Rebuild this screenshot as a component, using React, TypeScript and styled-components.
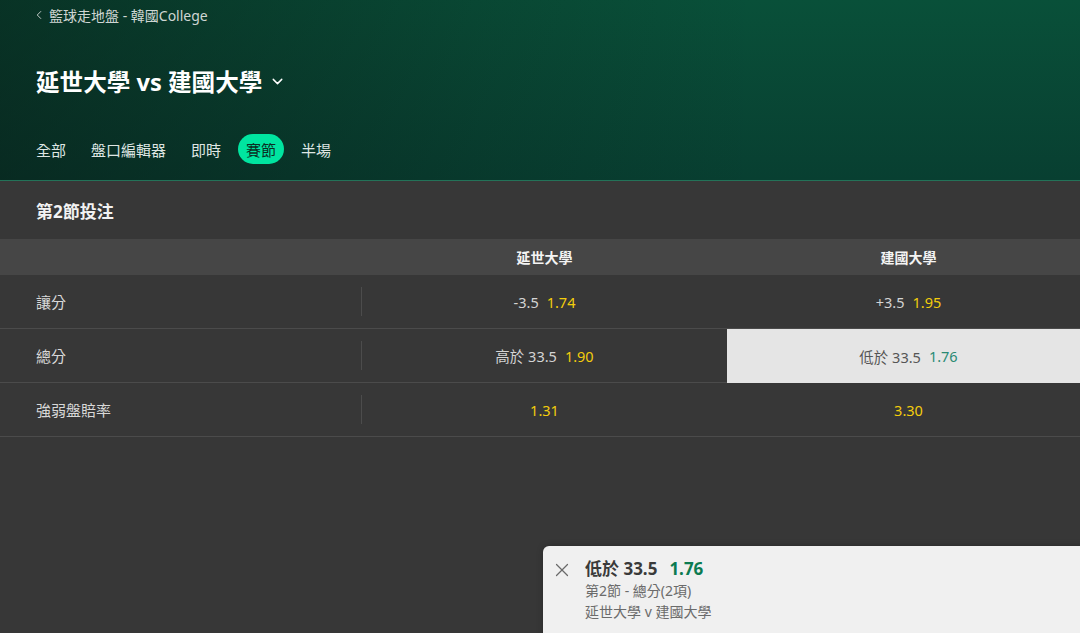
import React from "react";
import styled, { createGlobalStyle } from "styled-components";
import { ChevronDown, ChevronLeft, X } from "lucide-react";

const FONT = `"Noto Sans", "Noto Sans CJK TC", sans-serif`;

const Global = createGlobalStyle`
  html, body { margin: 0; padding: 0; background: #373737; }
  body { font-family: ${FONT}; overflow: hidden; }
  * { box-sizing: border-box; }
`;

const Page = styled.div`
  position: relative;
  width: 1080px;
  height: 633px;
  overflow: hidden;
  background: #373737;
`;

const Hero = styled.header`
  height: 181px;
  border-bottom: 1px solid #237258;
  background:
    linear-gradient(90deg, rgba(8, 22, 18, 0.5) 0%, rgba(8, 22, 18, 0.15) 45%, rgba(0, 0, 0, 0) 70%),
    linear-gradient(180deg, #095039 0%, #083f31 100%);
  display: flex;
  flex-direction: column;
`;

const Crumb = styled.div`
  display: flex;
  align-items: center;
  gap: 3px;
  padding: 5px 0 0 32px;
  height: 25px;
  font-size: 14px;
  color: #cfd6d3;
  svg { color: #cfd6d3; }
`;

const TitleRow = styled.div`
  display: flex;
  align-items: center;
  gap: 7px;
  padding: 33px 0 0 36px;
  height: 80px;
`;

const Title = styled.h1`
  margin: 0;
  font-size: 23.6px;
  font-weight: 700;
  color: #ffffff;
  line-height: 32px;
`;

const Tabs = styled.nav`
  display: flex;
  align-items: center;
  gap: 9px;
  padding: 29px 0 0 28px;
`;

const Tab = styled.div<{ $active?: boolean }>`
  height: 30px;
  padding: 0 8px;
  border-radius: 15px;
  display: flex;
  align-items: center;
  font-size: 15px;
  color: ${(p) => (p.$active ? "#0b2e23" : "#dfe6e3")};
  background: ${(p) => (p.$active ? "#00e5a0" : "transparent")};
`;

const SectionTitle = styled.h2`
  margin: 0;
  height: 58px;
  padding-left: 36px;
  display: flex;
  align-items: center;
  font-size: 17px;
  font-weight: 700;
  color: #f2f2f2;
`;

const Grid = styled.div`
  display: grid;
  grid-template-columns: 362px 365px 363px;
`;

const HeadRow = styled(Grid)`
  height: 36px;
  background: #464646;
`;

const HeadCell = styled.div`
  display: flex;
  align-items: center;
  justify-content: center;
  font-size: 14px;
  font-weight: 700;
  color: #f4f4f4;
`;

const Row = styled(Grid)`
  height: 54px;
  border-bottom: 1px solid #4b4b4b;
`;

const LabelCell = styled.div`
  display: flex;
  align-items: center;
  padding-left: 36px;
  font-size: 15px;
  color: #d8d8d8;
  position: relative;
  &::after {
    content: "";
    position: absolute;
    right: 0;
    top: 12px;
    bottom: 12px;
    width: 1px;
    background: #4c4c4c;
  }
`;

const OddsCell = styled.div<{ $selected?: boolean }>`
  display: flex;
  align-items: center;
  justify-content: center;
  gap: 8px;
  font-size: 14.5px;
  background: ${(p) => (p.$selected ? "#e5e5e5" : "transparent")};
  margin-bottom: ${(p) => (p.$selected ? "-1px" : "0")};
`;

const Line = styled.span<{ $selected?: boolean }>`
  color: ${(p) => (p.$selected ? "#555555" : "#d4d4d4")};
`;

const Price = styled.span<{ $selected?: boolean }>`
  color: ${(p) => (p.$selected ? "#2b8a74" : "#f3cd0c")};
`;

const Slip = styled.div`
  position: absolute;
  left: 543px;
  top: 546px;
  width: 560px;
  height: 100px;
  background: #f0f0f0;
  border-top-left-radius: 6px;
  display: flex;
  gap: 12px;
  padding: 11px 0 0 8px;
  box-shadow: 0 0 6px rgba(0, 0, 0, 0.25);
`;

const CloseBtn = styled.div`
  width: 22px;
  height: 22px;
  margin-top: 2px;
  color: #6a6a6a;
  display: flex;
  align-items: center;
  justify-content: center;
`;

const SlipBody = styled.div`
  display: flex;
  flex-direction: column;
`;

const SlipMain = styled.div`
  display: flex;
  gap: 12px;
  font-size: 17px;
  font-weight: 700;
  line-height: 23px;
  color: #3a3a3a;
`;

const SlipPrice = styled.span`
  color: #0c7b51;
`;

const SlipSub = styled.div`
  font-size: 14px;
  line-height: 21px;
  color: #6b6b6b;
`;

type Sel = { line?: string; price: string; selected?: boolean };
const rows: { label: string; a: Sel; b: Sel }[] = [
  { label: "讓分", a: { line: "-3.5", price: "1.74" }, b: { line: "+3.5", price: "1.95" } },
  { label: "總分", a: { line: "高於 33.5", price: "1.90" }, b: { line: "低於 33.5", price: "1.76", selected: true } },
  { label: "強弱盤賠率", a: { price: "1.31" }, b: { price: "3.30" } },
];

const Cell = ({ s }: { s: Sel }) => (
  <OddsCell $selected={s.selected}>
    {s.line && <Line $selected={s.selected}>{s.line}</Line>}
    <Price $selected={s.selected}>{s.price}</Price>
  </OddsCell>
);

export default function App() {
  return (
    <Page>
      <Global />
      <Hero>
        <Crumb>
          <ChevronLeft size={14} strokeWidth={1.6} />
          <span>籃球走地盤 - 韓國College</span>
        </Crumb>
        <TitleRow>
          <Title>延世大學 vs 建國大學</Title>
          <ChevronDown size={17} color="#ffffff" strokeWidth={2} />
        </TitleRow>
        <Tabs>
          <Tab>全部</Tab>
          <Tab>盤口編輯器</Tab>
          <Tab>即時</Tab>
          <Tab $active>賽節</Tab>
          <Tab>半場</Tab>
        </Tabs>
      </Hero>
      <SectionTitle>第2節投注</SectionTitle>
      <HeadRow>
        <div />
        <HeadCell>延世大學</HeadCell>
        <HeadCell>建國大學</HeadCell>
      </HeadRow>
      {rows.map((r) => (
        <Row key={r.label}>
          <LabelCell>{r.label}</LabelCell>
          <Cell s={r.a} />
          <Cell s={r.b} />
        </Row>
      ))}
      <Slip>
        <CloseBtn>
          <X size={22} strokeWidth={1.3} />
        </CloseBtn>
        <SlipBody>
          <SlipMain>
            <span>低於 33.5</span>
            <SlipPrice>1.76</SlipPrice>
          </SlipMain>
          <SlipSub>第2節 - 總分(2項)</SlipSub>
          <SlipSub>延世大學 v 建國大學</SlipSub>
        </SlipBody>
      </Slip>
    </Page>
  );
}
